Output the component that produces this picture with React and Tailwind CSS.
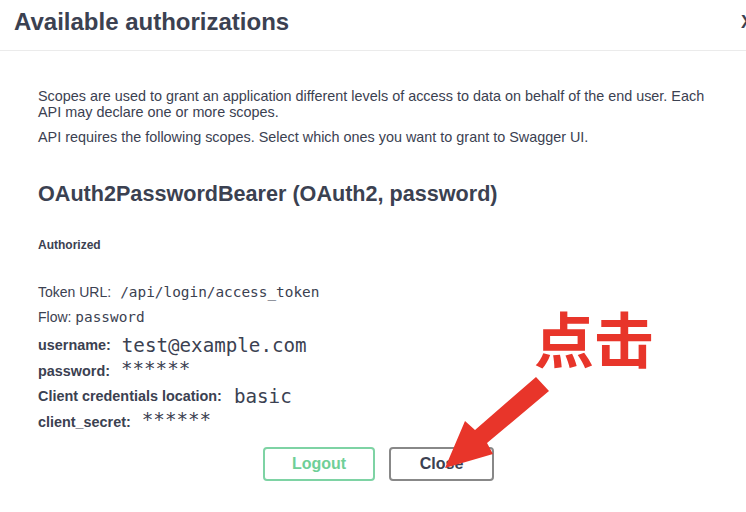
export default function App() {
  return (
    <div className="relative w-[746px] h-[512px] overflow-hidden bg-white text-[#3b4151] font-['Liberation_Sans',Arial,sans-serif]">
      <div className="flex h-[51px] items-start justify-between border-b border-[#ebebeb] pl-[14px]">
        <h4 className="mt-[8px] text-[24px] font-bold leading-[28px]">Available authorizations</h4>
        <div className="mt-[13px] mr-[-7px] text-[18px] font-bold leading-[18px]">X</div>
      </div>
      <div className="px-[38px] pt-[37px]">
        <p className="mr-[-12px] text-[14.4px] leading-[16px]">
          Scopes are used to grant an application different levels of access to data on behalf of the end user. Each API may declare one or more scopes.
        </p>
        <p className="mt-[9px] text-[14.4px] leading-[16px]">
          API requires the following scopes. Select which ones you want to grant to Swagger UI.
        </p>
        <h4 className="mt-[37px] text-[21.6px] font-bold leading-[24px]">OAuth2PasswordBearer (OAuth2, password)</h4>
        <h6 className="mt-[32px] text-[12px] font-bold leading-[14px]">Authorized</h6>
        <p className="mt-[31px] flex text-[14px] leading-[18px]">
          <span>Token URL:</span>
          <code className="ml-[9px] font-['DejaVu_Sans_Mono',monospace] text-[14.4px]">/api/login/access_token</code>
        </p>
        <p className="mt-[7px] text-[14px] leading-[18px]">
          Flow: <code className="font-['DejaVu_Sans_Mono',monospace] text-[14.4px]">password</code>
        </p>
        <div className="mt-[7px] flex flex-col">
          <div className="flex items-center h-[26px]">
            <label className="text-[14.4px] font-bold">username:</label>
            <code className="ml-[11px] font-['DejaVu_Sans_Mono',monospace] text-[19.2px]">test@example.com</code>
          </div>
          <div className="flex items-center h-[25px]">
            <label className="text-[14.4px] font-bold">password:</label>
            <code className="ml-[11px] -mt-[4px] font-['DejaVu_Sans_Mono',monospace] text-[19.2px]">******</code>
          </div>
          <div className="flex items-center h-[26px]">
            <label className="text-[14.4px] font-bold">Client credentials location:</label>
            <code className="ml-[12px] font-['DejaVu_Sans_Mono',monospace] text-[19.2px]">basic</code>
          </div>
          <div className="flex items-center h-[25px]">
            <label className="text-[14.4px] font-bold">client_secret:</label>
            <code className="ml-[11px] -mt-[4px] font-['DejaVu_Sans_Mono',monospace] text-[19.2px]">******</code>
          </div>
        </div>
        <div className="mt-[12px] flex justify-center gap-[14px] pl-[11px]">
          <button className="h-[34px] w-[112px] rounded-[4px] border-2 border-[#7ed3a4] text-[16px] font-bold text-[#6fcf97]">Logout</button>
          <button className="h-[34px] w-[105px] rounded-[4px] border-2 border-[#888888] text-[16px] font-bold text-[#3b4151]">Close</button>
        </div>
      </div>
      <div className="absolute left-[534px] top-[301px] text-[60px] font-bold leading-[72px] text-[#e8352a] font-['Noto_Sans_CJK_SC',sans-serif]">点击</div>
      <svg className="absolute left-0 top-0" width="746" height="512" viewBox="0 0 746 512">
        <polygon points="536,377 549,391 487,443 493,454 445,468 465,421 475,430" fill="#e8352a" />
      </svg>
    </div>
  );
}
